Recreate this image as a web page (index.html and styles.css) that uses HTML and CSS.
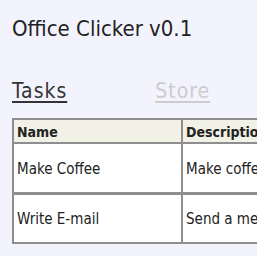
FILE: index.html
```html
<!DOCTYPE html>
<html lang="en">
<head>
  <meta charset="UTF-8" />
  <title>Office Clicker v0.1</title>
  <link rel="stylesheet" href="styles.css">
</head>
<body>

<header>
  <h1>Office Clicker v0.1</h1>
</header>

<nav class="tabs">
  <a class="tab active" href="#tasks">Tasks</a>
  <a class="tab" href="#store">Store</a>
</nav>

<main>
  <table class="tasks">
    <thead>
      <tr>
        <th class="col-name">Name</th>
        <th class="col-desc">Description</th>
      </tr>
    </thead>
    <tbody>
      <tr>
        <td>Make Coffee</td>
        <td>Make coffee for the office</td>
      </tr>
      <tr>
        <td>Write E-mail</td>
        <td>Send a message to a coworker</td>
      </tr>
    </tbody>
  </table>
</main>

</body>
</html>
```

FILE: styles.css
```css
* { box-sizing: border-box; margin: 0; padding: 0; }

html, body {
  overflow: hidden;
}

body {
  font-family: "DejaVu Sans Condensed", "DejaVu Sans", sans-serif;
  background: #f3f3fd;
  color: #222;
  padding: 12px 0 0 12px;
  width: 600px;
}

header h1 {
  font-size: 22px;
  font-weight: normal;
  line-height: 26px;
  margin-top: 4px;
}

.tabs {
  display: flex;
  gap: 88px;
  margin-top: 37px;
}

.tab {
  font-size: 21px;
  line-height: 24px;
  letter-spacing: 1px;
  color: #ccc;
  text-decoration: underline;
  text-decoration-thickness: 2px;
  text-underline-offset: 3px;
}

.tab.active {
  color: #333;
}

main {
  margin-top: 15px;
}

.tasks {
  border-collapse: collapse;
  border: 2px solid #8e8e8e;
  font-size: 15px;
  background: #fff;
}

.tasks th,
.tasks td {
  border: 2px solid #8e8e8e;
  text-align: left;
  padding: 2px 3px 0;
}

.tasks th {
  background: #f1f1e5;
  height: 24px;
  font-size: 14px;
  font-weight: bold;
}

.tasks td {
  height: 50px;
}

.tasks tbody tr:first-child td {
  border-bottom-width: 3px;
}

.col-name {
  width: 169px;
}

.col-desc {
  width: 300px;
}
```
